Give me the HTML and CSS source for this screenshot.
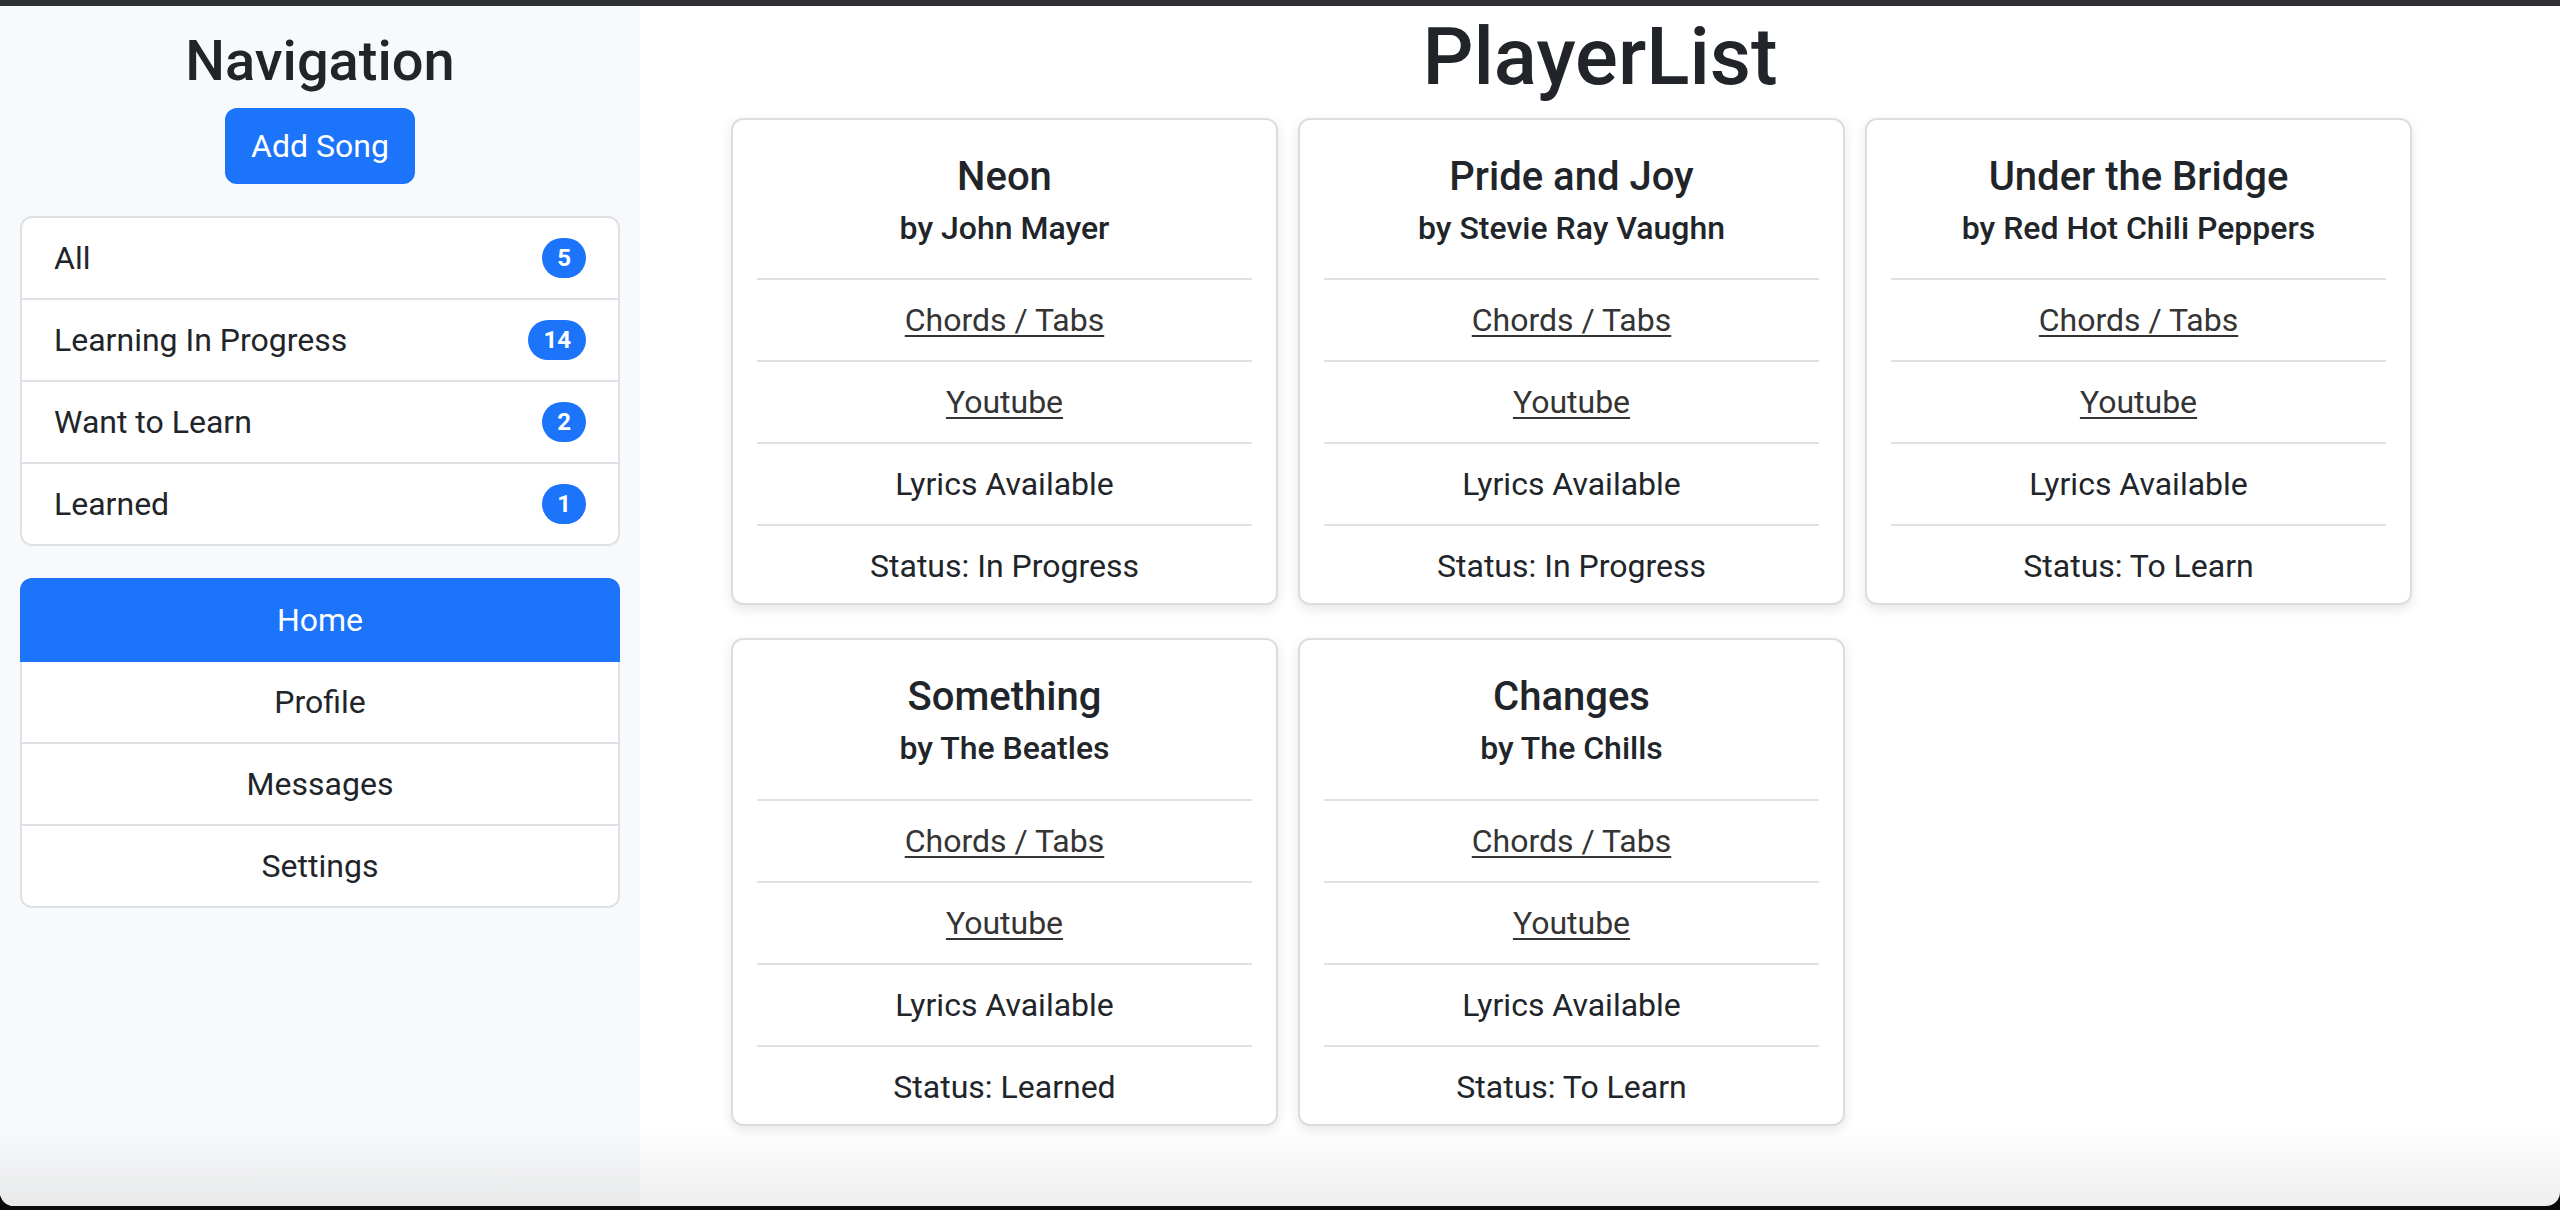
FILE: index.html
```html
<!DOCTYPE html>
<html lang="en">
<head>
<meta charset="utf-8">
<title>PlayerList</title>
<link rel="stylesheet" href="styles.css">
</head>
<body>
<div class="window">
  <div class="titlebar"></div>
  <div class="app">
    <aside class="sidebar">
      <h3 class="nav-title">Navigation</h3>
      <button class="btn-add" type="button">Add Song</button>
      <ul class="list filter-list">
        <li><span>All</span><span class="badge">5</span></li>
        <li><span>Learning In Progress</span><span class="badge">14</span></li>
        <li><span>Want to Learn</span><span class="badge">2</span></li>
        <li><span>Learned</span><span class="badge">1</span></li>
      </ul>
      <ul class="list nav-list">
        <li class="active">Home</li>
        <li>Profile</li>
        <li>Messages</li>
        <li>Settings</li>
      </ul>
    </aside>
    <main class="main">
      <h1 class="page-title">PlayerList</h1>
      <div class="cards">
        <div class="card">
          <div class="card-head"><h5 class="card-title">Neon</h5><h6 class="card-sub">by John Mayer</h6></div>
          <ul class="card-list">
            <li><a href="#">Chords / Tabs</a></li>
            <li><a href="#">Youtube</a></li>
            <li>Lyrics Available</li>
            <li>Status: In Progress</li>
          </ul>
        </div>
        <div class="card">
          <div class="card-head"><h5 class="card-title">Pride and Joy</h5><h6 class="card-sub">by Stevie Ray Vaughn</h6></div>
          <ul class="card-list">
            <li><a href="#">Chords / Tabs</a></li>
            <li><a href="#">Youtube</a></li>
            <li>Lyrics Available</li>
            <li>Status: In Progress</li>
          </ul>
        </div>
        <div class="card">
          <div class="card-head"><h5 class="card-title">Under the Bridge</h5><h6 class="card-sub">by Red Hot Chili Peppers</h6></div>
          <ul class="card-list">
            <li><a href="#">Chords / Tabs</a></li>
            <li><a href="#">Youtube</a></li>
            <li>Lyrics Available</li>
            <li>Status: To Learn</li>
          </ul>
        </div>
        <div class="card">
          <div class="card-head"><h5 class="card-title">Something</h5><h6 class="card-sub">by The Beatles</h6></div>
          <ul class="card-list">
            <li><a href="#">Chords / Tabs</a></li>
            <li><a href="#">Youtube</a></li>
            <li>Lyrics Available</li>
            <li>Status: Learned</li>
          </ul>
        </div>
        <div class="card">
          <div class="card-head"><h5 class="card-title">Changes</h5><h6 class="card-sub">by The Chills</h6></div>
          <ul class="card-list">
            <li><a href="#">Chords / Tabs</a></li>
            <li><a href="#">Youtube</a></li>
            <li>Lyrics Available</li>
            <li>Status: To Learn</li>
          </ul>
        </div>
      </div>
    </main>
    <div class="bottom-shade"></div>
  </div>
</div>
</body>
</html>
```

FILE: styles.css
```css
* { box-sizing: border-box; }

html, body {
  margin: 0;
  padding: 0;
  background: #0b0b0c;
}

body {
  font-family: Roboto, "Liberation Sans", Arial, sans-serif;
  color: #212529;
  font-size: 32px;
  line-height: 48px;
}

.window {
  width: 2560px;
  height: 1206px;
  overflow: hidden;
  border-radius: 0 0 14px 14px;
  background: #ffffff;
  display: flex;
  flex-direction: column;
}

.titlebar {
  height: 6px;
  flex: none;
  background: #2f3034;
}

.app {
  position: relative;
  flex: 1;
  display: flex;
}

/* Sidebar */
.sidebar {
  width: 640px;
  flex: none;
  background: #f8f9fa;
  padding: 0 20px;
  display: flex;
  flex-direction: column;
  align-items: center;
}

.nav-title {
  margin: 22px 0 0;
  font-size: 56px;
  line-height: 67.2px;
  font-weight: 500;
}

.btn-add {
  margin-top: 13px;
  font-family: inherit;
  font-size: 32px;
  line-height: 48px;
  padding: 12px 24px;
  color: #ffffff;
  background: #1c74fb;
  border: 2px solid #1c74fb;
  border-radius: 12px;
}

.list {
  list-style: none;
  margin: 32px 0 0;
  padding: 0;
  width: 100%;
}

.list li {
  background: #ffffff;
  border: 2px solid #dee2e6;
  padding: 16px 32px;
}

.list li + li { border-top: 0; }
.list li:first-child { border-radius: 12px 12px 0 0; }
.list li:last-child { border-radius: 0 0 12px 12px; }

.filter-list li {
  display: flex;
  justify-content: space-between;
  align-items: center;
}

.badge {
  background: #1c74fb;
  color: #ffffff;
  font-size: 24px;
  font-weight: 700;
  line-height: 24px;
  padding: 8px 15px;
  border-radius: 40px;
}

.nav-list li { text-align: center; }

.nav-list li.active {
  background: #1c74fb;
  border-color: #1c74fb;
  color: #ffffff;
}

/* Main */
.main {
  flex: 1;
  display: flex;
  flex-direction: column;
}

.page-title {
  margin: 3px 0 0;
  text-align: center;
  font-size: 80px;
  line-height: 96px;
  font-weight: 500;
}

.cards {
  margin-top: 13px;
  padding-left: 91px;
  display: grid;
  grid-template-columns: repeat(3, 547px);
  column-gap: 20px;
  row-gap: 33px;
}

.card {
  background: #ffffff;
  border: 2px solid #dcdddf;
  border-radius: 12px;
  box-shadow: 0 4px 12px rgba(0, 0, 0, 0.1);
}

.card-head {
  padding: 33px 24px 31px;
  text-align: center;
}

.card-title {
  margin: 0 0 8px;
  font-size: 40px;
  line-height: 48px;
  font-weight: 500;
}

.card-sub {
  margin: 0;
  font-size: 32px;
  line-height: 38.4px;
  font-weight: 500;
}

.card-list {
  list-style: none;
  margin: 0 24px;
  padding: 0;
}

.card-list li {
  border-top: 2px solid #dee2e6;
  padding: 16px;
  text-align: center;
}

.card-list li:last-child { padding-bottom: 13px; }

.card-list a {
  color: #343434;
  text-decoration: underline;
  text-decoration-thickness: 2px;
  text-underline-offset: 4px;
}

.bottom-shade {
  position: absolute;
  left: 0;
  right: 0;
  bottom: 0;
  height: 76px;
  pointer-events: none;
  background: linear-gradient(to bottom, rgba(0, 0, 0, 0), rgba(0, 0, 0, 0.065));
}
```
